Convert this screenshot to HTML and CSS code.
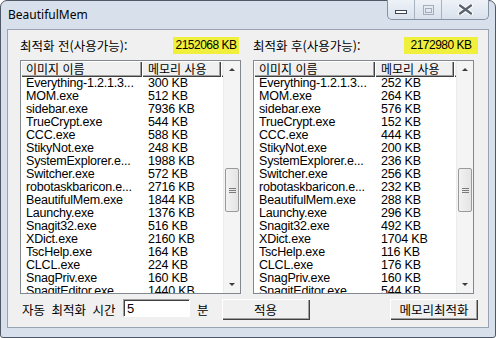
FILE: index.html
```html
<!DOCTYPE html>
<html lang="ko">
<head>
    <meta charset="UTF-8">
    <title>BeautifulMem</title>
    <link rel="stylesheet" href="styles.css">
</head>
<body>
<div class="window">
    <div class="titlebar">
        <span class="title">BeautifulMem</span>
        <div class="caption-buttons">
            <div class="cap cap-min">
                <svg width="12" height="4" viewBox="0 0 12 4"><rect x="0.5" y="0.5" width="11" height="3" fill="#fff" stroke="#3b4656"/></svg>
            </div>
            <div class="cap cap-max">
                <svg width="11" height="10" viewBox="0 0 11 10"><rect x="0.5" y="0.5" width="10" height="9" fill="none" stroke="#a3adbb"/><rect x="2.5" y="3.5" width="6" height="4" fill="none" stroke="#a3adbb"/></svg>
            </div>
            <div class="cap cap-close">
                <svg width="17" height="11" viewBox="0 0 17 11"><path d="M3 1.5L14 9.5M14 1.5L3 9.5" stroke="#fff" stroke-width="4.5" stroke-linecap="round"/><path d="M3 1.5L14 9.5M14 1.5L3 9.5" stroke="#5a6270" stroke-width="2.2" stroke-linecap="round"/></svg>
            </div>
        </div>
    </div>

    <div class="client">
        <div class="panels">
            <section class="panel">
                <div class="stat">
                    <span class="stat-label">최적화 전(사용가능):</span>
                    <span class="stat-value before">2152068 KB</span>
                </div>
                <div class="listview">
                    <div class="list-main">
                        <div class="list-header">
                            <div class="hcol col-name">이미지 이름</div>
                            <div class="hcol col-mem">메모리 사용</div>
                            <div class="hcol col-fill"></div>
                        </div>
                        <div class="list-body">
                            <div class="row"><span class="col-name">Everything-1.2.1.3...</span><span class="col-mem">300 KB</span></div>
                            <div class="row"><span class="col-name">MOM.exe</span><span class="col-mem">512 KB</span></div>
                            <div class="row"><span class="col-name">sidebar.exe</span><span class="col-mem">7936 KB</span></div>
                            <div class="row"><span class="col-name">TrueCrypt.exe</span><span class="col-mem">544 KB</span></div>
                            <div class="row"><span class="col-name">CCC.exe</span><span class="col-mem">588 KB</span></div>
                            <div class="row"><span class="col-name">StikyNot.exe</span><span class="col-mem">248 KB</span></div>
                            <div class="row"><span class="col-name">SystemExplorer.e...</span><span class="col-mem">1988 KB</span></div>
                            <div class="row"><span class="col-name">Switcher.exe</span><span class="col-mem">572 KB</span></div>
                            <div class="row"><span class="col-name">robotaskbaricon.e...</span><span class="col-mem">2716 KB</span></div>
                            <div class="row"><span class="col-name">BeautifulMem.exe</span><span class="col-mem">1844 KB</span></div>
                            <div class="row"><span class="col-name">Launchy.exe</span><span class="col-mem">1376 KB</span></div>
                            <div class="row"><span class="col-name">Snagit32.exe</span><span class="col-mem">516 KB</span></div>
                            <div class="row"><span class="col-name">XDict.exe</span><span class="col-mem">2160 KB</span></div>
                            <div class="row"><span class="col-name">TscHelp.exe</span><span class="col-mem">164 KB</span></div>
                            <div class="row"><span class="col-name">CLCL.exe</span><span class="col-mem">224 KB</span></div>
                            <div class="row"><span class="col-name">SnagPriv.exe</span><span class="col-mem">160 KB</span></div>
                            <div class="row"><span class="col-name">SnagitEditor.exe</span><span class="col-mem">1440 KB</span></div>
                        </div>
                    </div>
                    <div class="scrollbar">
                        <div class="sb-btn"><span class="arrow-up"></span></div>
                        <div class="sb-track"><div class="sb-thumb"><span class="grip"></span></div></div>
                        <div class="sb-btn"><span class="arrow-down"></span></div>
                    </div>
                </div>
            </section>

            <section class="panel">
                <div class="stat">
                    <span class="stat-label">최적화 후(사용가능):</span>
                    <span class="stat-value after">2172980 KB</span>
                </div>
                <div class="listview">
                    <div class="list-main">
                        <div class="list-header">
                            <div class="hcol col-name">이미지 이름</div>
                            <div class="hcol col-mem">메모리 사용</div>
                            <div class="hcol col-fill"></div>
                        </div>
                        <div class="list-body">
                            <div class="row"><span class="col-name">Everything-1.2.1.3...</span><span class="col-mem">252 KB</span></div>
                            <div class="row"><span class="col-name">MOM.exe</span><span class="col-mem">264 KB</span></div>
                            <div class="row"><span class="col-name">sidebar.exe</span><span class="col-mem">576 KB</span></div>
                            <div class="row"><span class="col-name">TrueCrypt.exe</span><span class="col-mem">152 KB</span></div>
                            <div class="row"><span class="col-name">CCC.exe</span><span class="col-mem">444 KB</span></div>
                            <div class="row"><span class="col-name">StikyNot.exe</span><span class="col-mem">200 KB</span></div>
                            <div class="row"><span class="col-name">SystemExplorer.e...</span><span class="col-mem">236 KB</span></div>
                            <div class="row"><span class="col-name">Switcher.exe</span><span class="col-mem">256 KB</span></div>
                            <div class="row"><span class="col-name">robotaskbaricon.e...</span><span class="col-mem">232 KB</span></div>
                            <div class="row"><span class="col-name">BeautifulMem.exe</span><span class="col-mem">288 KB</span></div>
                            <div class="row"><span class="col-name">Launchy.exe</span><span class="col-mem">296 KB</span></div>
                            <div class="row"><span class="col-name">Snagit32.exe</span><span class="col-mem">492 KB</span></div>
                            <div class="row"><span class="col-name">XDict.exe</span><span class="col-mem">1704 KB</span></div>
                            <div class="row"><span class="col-name">TscHelp.exe</span><span class="col-mem">116 KB</span></div>
                            <div class="row"><span class="col-name">CLCL.exe</span><span class="col-mem">176 KB</span></div>
                            <div class="row"><span class="col-name">SnagPriv.exe</span><span class="col-mem">160 KB</span></div>
                            <div class="row"><span class="col-name">SnagitEditor.exe</span><span class="col-mem">544 KB</span></div>
                        </div>
                    </div>
                    <div class="scrollbar">
                        <div class="sb-btn"><span class="arrow-up"></span></div>
                        <div class="sb-track"><div class="sb-thumb"><span class="grip"></span></div></div>
                        <div class="sb-btn"><span class="arrow-down"></span></div>
                    </div>
                </div>
            </section>
        </div>

        <div class="controls">
            <span class="ctl-label">자동 최적화 시간</span>
            <input class="minutes" type="text" value="5">
            <span class="ctl-unit">분</span>
            <button class="win-btn apply">적용</button>
            <button class="win-btn optimize">메모리최적화</button>
        </div>
    </div>
</div>
</body>
</html>
```

FILE: styles.css
```css
:root {
    --frame-color: #d8e0eb;
    --face-color: #f0f0f0;
    --shadow-dark: #404040;
    --shadow-light: #a0a0a0;
    --highlight: #ffffff;
    --value-bg: #f0f03c;
}

* {
    box-sizing: border-box;
    margin: 0;
    padding: 0;
}

body {
    width: 496px;
    height: 338px;
    overflow: hidden;
    background: #ffffff;
    font-family: "Liberation Sans", "Noto Sans CJK KR", sans-serif;
    color: #000;
}

.window {
    width: 496px;
    height: 338px;
    border: 1px solid #4f5866;
    border-radius: 7px 7px 3px 3px;
    background: var(--frame-color);
    display: flex;
    flex-direction: column;
}

/* Title bar */
.titlebar {
    height: 28px;
    display: flex;
    align-items: flex-start;
    flex-shrink: 0;
}

.title {
    font-family: "Noto Sans", "Open Sans", sans-serif;
    font-size: 12px;
    line-height: 14px;
    margin: 7px 0 0 7px;
}

.caption-buttons {
    display: flex;
    margin: -1px 6px 0 auto;
    height: 20px;
    border: 1px solid #8693a5;
    border-top: none;
    border-radius: 0 0 5px 5px;
    overflow: hidden;
    background: linear-gradient(#eef2f8, #d9e1ec);
}

.cap {
    height: 19px;
    display: flex;
    align-items: center;
    justify-content: center;
    border-right: 1px solid #a7b2c2;
}

.cap-min {
    width: 27px;
    padding-top: 5px;
}

.cap-max {
    width: 27px;
}

.cap-close {
    width: 46px;
    border-right: none;
}

/* Client area */
.client {
    flex: 1;
    margin: 0 6px 9px 6px;
    border: 1px solid #97a3b3;
    background: var(--face-color);
    padding: 7px 13px 7px 12px;
    display: flex;
    flex-direction: column;
}

.panels {
    display: flex;
    gap: 12px;
}

.panel {
    width: 221px;
    display: flex;
    flex-direction: column;
}

.stat {
    height: 17px;
    display: flex;
    align-items: center;
    margin-bottom: 6px;
}

.stat-label {
    font-family: "Noto Sans CJK KR", sans-serif;
    font-size: 12.5px;
    line-height: 17px;
    white-space: nowrap;
}

.stat-value {
    margin-left: auto;
    height: 17px;
    background: var(--value-bg);
    font-size: 12px;
    line-height: 17px;
    letter-spacing: -0.5px;
    text-align: center;
    white-space: nowrap;
}

.stat-value.before {
    width: 66px;
    margin-right: 2px;
}

.stat-value.after {
    width: 74px;
    margin-right: -4px;
}

/* List view */
.listview {
    height: 234px;
    border: 1px solid #828790;
    background: #fff;
    display: flex;
}

.list-main {
    flex: 1;
    overflow: hidden;
    display: flex;
    flex-direction: column;
}

.list-header {
    height: 16px;
    display: flex;
    flex-shrink: 0;
    background: var(--face-color);
}

.hcol {
    height: 16px;
    font-family: "Noto Sans CJK KR", sans-serif;
    font-size: 12px;
    line-height: 15px;
    box-shadow: inset 1px 1px var(--highlight), inset -1px -1px var(--shadow-dark), inset -2px -2px var(--shadow-light);
}

.col-name {
    width: 121px;
    padding-left: 5px;
    flex-shrink: 0;
    white-space: nowrap;
    overflow: hidden;
}

.col-mem {
    width: 79px;
    padding-left: 6px;
    flex-shrink: 0;
    white-space: nowrap;
}

.hcol.col-fill {
    flex: 1;
    box-shadow: inset 1px 1px var(--highlight), inset 0 -1px var(--shadow-dark), inset 0 -2px var(--shadow-light);
}

.list-body {
    flex: 1;
    overflow: hidden;
}

.row {
    display: flex;
    height: 13px;
    font-size: 12.5px;
    line-height: 13px;
    letter-spacing: -0.2px;
}

/* Scroll bar */
.scrollbar {
    width: 17px;
    flex-shrink: 0;
    display: flex;
    flex-direction: column;
    background: #f4f4f4;
    border-left: 1px solid #ececec;
}

.sb-btn {
    height: 17px;
    display: flex;
    align-items: center;
    justify-content: center;
}

.arrow-up {
    width: 0;
    height: 0;
    border-left: 3px solid transparent;
    border-right: 3px solid transparent;
    border-bottom: 3px solid #3c3c3c;
}

.arrow-down {
    width: 0;
    height: 0;
    border-left: 3px solid transparent;
    border-right: 3px solid transparent;
    border-top: 3px solid #3c3c3c;
}

.sb-track {
    flex: 1;
    padding-top: 90px;
}

.sb-thumb {
    height: 44px;
    margin: 0 1px;
    border: 1px solid #9a9a9a;
    border-radius: 2px;
    background: linear-gradient(to right, #f2f2f2, #e4e4e4);
    display: flex;
    align-items: center;
    justify-content: center;
}

.grip {
    width: 7px;
    height: 5px;
    border-top: 1px solid #7a7a7a;
    border-bottom: 1px solid #7a7a7a;
    background: linear-gradient(#7a7a7a, #7a7a7a) center / 7px 1px no-repeat;
}

/* Bottom controls */
.controls {
    margin-top: 5px;
    height: 20px;
    display: flex;
    align-items: center;
    font-family: "Noto Sans CJK KR", sans-serif;
    font-size: 12.5px;
}

.ctl-label {
    margin-left: 2px;
    width: 101px;
    word-spacing: 3px;
    white-space: nowrap;
}

.minutes {
    width: 67px;
    height: 18px;
    margin-top: -2px;
    border: 1px solid;
    border-color: var(--shadow-light) var(--highlight) var(--highlight) var(--shadow-light);
    box-shadow: inset 1px 1px var(--shadow-dark);
    background: #fff;
    font-family: "Liberation Sans", sans-serif;
    font-size: 13px;
    padding-left: 3px;
    outline: none;
}

.ctl-unit {
    margin-left: 7px;
}

.win-btn {
    height: 21px;
    width: 88px;
    background: var(--face-color);
    border: none;
    box-shadow: inset 1px 1px var(--highlight), inset -1px -1px var(--shadow-dark), inset -2px -2px var(--shadow-light);
    font-family: "Noto Sans CJK KR", sans-serif;
    font-size: 12.5px;
    color: #000;
}

.win-btn.apply {
    margin-left: 13px;
}

.win-btn.optimize {
    margin-left: auto;
    margin-right: -3px;
}
```
